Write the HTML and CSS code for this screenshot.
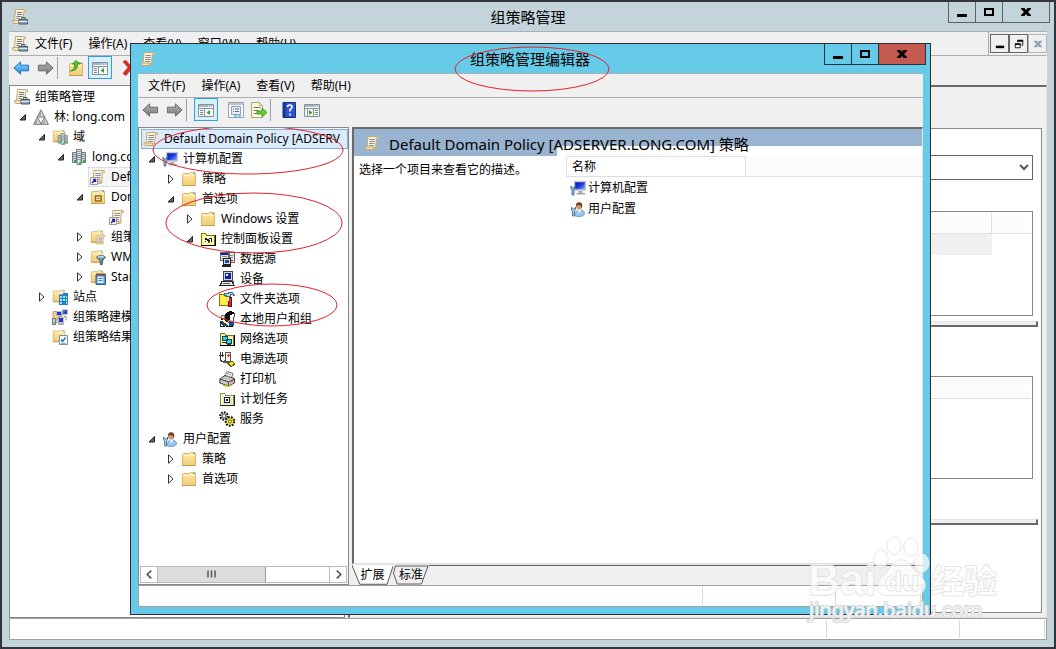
FILE: index.html
```html
<!DOCTYPE html>
<html lang="zh-CN">
<head>
<meta charset="utf-8">
<title>组策略管理</title>
<link rel="stylesheet" href="styles.css">
</head>
<body>
<svg class="sprite" aria-hidden="true">
  <defs>
    <linearGradient id="g-folder" x1="0" y1="0" x2="0" y2="1"><stop offset="0" stop-color="#ffe9a8"/><stop offset="1" stop-color="#f0cc78"/></linearGradient>
    <linearGradient id="g-blue" x1="0" y1="0" x2="0" y2="1"><stop offset="0" stop-color="#8fd8ff"/><stop offset="1" stop-color="#1d86dc"/></linearGradient>
    <linearGradient id="g-gray" x1="0" y1="0" x2="0" y2="1"><stop offset="0" stop-color="#b5b5b5"/><stop offset="1" stop-color="#767676"/></linearGradient>
    <linearGradient id="g-screen" x1="0" y1="0" x2="1" y2="1"><stop offset="0" stop-color="#0010a0"/><stop offset=".5" stop-color="#1a3be0"/><stop offset="1" stop-color="#9cc4ff"/></linearGradient>
  </defs>
  <symbol id="open" viewBox="0 0 10 10"><path d="M7.500 2.500v5.500H2z" fill="#666" stroke="#222"/></symbol>
  <symbol id="closed" viewBox="0 0 10 10"><path d="M2.500 .8v8.400l4.500-4.200z" fill="#fff" stroke="#333"/></symbol>
  <symbol id="scroll" viewBox="0 0 16 16"><path d="M4 1.500h9.500q1.500 0 1 2h-2l-1 9H3z" fill="#faf1d6" stroke="#c0a877"/><path d="M12.500 1.500q-1.200 1-.8 2.500h3q.5-2.500-2.200-2.500z" fill="#d9c290"/><path d="M1 12h8.500q-.5 2.500 1.500 2.500H2.500Q.8 14.500 1 12zM11 14.500q1.600-.3 1-2.500" fill="#f4e3b5" stroke="#c0a877"/><path d="M5.500 4.500H11M5.300 6.500h5.500M5 8.500h5.500M4.800 10.500H10" stroke="#8b8fa6"/></symbol>
  <symbol id="scroll-pc" viewBox="0 0 16 16"><path d="M3.500 .5h9q1.500 0 1 2h-1.700l-1 9H2.500z" fill="#faf1d6" stroke="#c0a877"/><path d="M.5 11.500h7v3H2q-1.500 0-1.500-3z" fill="#f4e3b5" stroke="#c0a877"/><path d="M5 3.500h5M5 5.500h5M4.500 7.500h5M4.500 9.500h3" stroke="#777b8c"/><path d="M7 10.500h8.500v4.500H7z" fill="#8fa5b5" stroke="#48596a"/><path d="M9.500 10V8.500h3.500V10" fill="none" stroke="#48596a"/><path d="M7 12.500h8.500" stroke="#dce7ee"/></symbol>
  <symbol id="scroll-link" viewBox="0 0 16 16"><use href="#scroll"/><path d="M.5 8.500h7v7h-7z" fill="#fff" stroke="#999"/><path d="M2 14l3-3M2.800 10.500h2.700v2.700" fill="none" stroke="#25259a" stroke-width="1.500"/></symbol>
  <symbol id="forest" viewBox="0 0 16 16"><path d="M8 .8L15.400 15.300H.6z" fill="#d8d8d8" stroke="#777"/><path d="M4.400 8h7.200L8 15z" fill="#fafafa" stroke="#777"/><path d="M8 2v5.500H5.200zM4.300 9.500V14.800H1.500zM11.700 9.500v5.300H9.200z" fill="#a5a5a5"/></symbol>
  <symbol id="folder" viewBox="0 0 16 16"><path d="M1.500 3.500q0-1 1-1h6l1-1h4q1 0 1 1v12h-13z" fill="url(#g-folder)" stroke="#d9b566"/><path d="M10 2.500h4" stroke="#fff"/><path d="M12 2.500h2" stroke="#4aa3e8"/><path d="M2 4.500h12" stroke="#fff3c8"/><path d="M1 14.500h14" stroke="#c59d50"/></symbol>
  <symbol id="servers" viewBox="0 0 16 16"><g stroke="#6d7b82"><path d="M5.500.5h5v9h-5z" fill="#dbe3e6"/><path d="M1.500 3.500h4v10h-4zM10.500 3.500h4v10h-4z" fill="#c3ced2"/><path d="M6 6.500h4v9H6z" fill="#dfe7ea"/></g><path d="M6 2.500h4M6 4.500h4M2 5.500h3M2 7.500h3M2 9.500h3M11 5.500h3M11 7.500h3M11 9.500h3M6.500 8.500h3M6.500 10.500h3" stroke="#8d9ba1"/><path d="M3 12h2M12 12h2M8 14h2" stroke="#21bf31" stroke-width="2"/></symbol>
  <symbol id="folder-servers" viewBox="0 0 16 16"><use href="#folder" width="14" height="14"/><use href="#servers" x="5" y="4" width="12" height="12"/></symbol>
  <symbol id="folder-ou" viewBox="0 0 16 16"><use href="#folder"/><path d="M5.500 7h5.500v5H5.500z" fill="#fff2bd" stroke="#8f6914" stroke-width="1.500"/><path d="M7 9.500h2.500" stroke="#8f6914"/></symbol>
  <symbol id="folder-scroll" viewBox="0 0 16 16"><use href="#folder" width="14" height="15"/><use href="#scroll" x="5" y="5" width="11" height="11"/></symbol>
  <symbol id="folder-filter" viewBox="0 0 16 16"><use href="#folder" width="14" height="15"/><path d="M6.500 8h9l-3.200 4v3.500h-2V12z" fill="#6f8fae" stroke="#3f5c7b"/><ellipse cx="11" cy="8" rx="4.200" ry="1.400" fill="#d6e4ef" stroke="#5c7a98"/></symbol>
  <symbol id="folder-book" viewBox="0 0 16 16"><use href="#folder" width="14" height="15"/><path d="M6 5.500h9.500v10H6z" fill="#5a98cd" stroke="#2f5d8a"/><path d="M6 5.500h9.500" stroke="#7a4b3a" stroke-width="2"/><path d="M7.500 7.500h6v6.500h-6z" fill="#dceaf6"/><path d="M8.500 9.500h4M8.500 11.500h4" stroke="#58799a"/></symbol>
  <symbol id="folder-site" viewBox="0 0 16 16"><use href="#folder" width="14" height="14"/><path d="M7 5.500h4V4h5v12H7z" fill="#1b7fd0"/><path d="M8 7h2v2H8zM11 7h2v2h-2zM14 7h1v2h-1zM8 10h2v2H8zM11 10h2v2h-2zM14 10h1v2h-1zM8 13h2v2H8zM14 13h1v2h-1z" fill="#b8e3ff"/></symbol>
  <symbol id="modeling" viewBox="0 0 16 16"><path d="M1 2.500h9v11H1z" fill="#eed08a" stroke="#c79f52"/><path d="M4.500 2.500h5v4h-5zM10.500.8h5v4.500h-5zM6.500 8.500h5v5h-5z" fill="#2837c4" stroke="#b6bed0"/><path d="M.5 9.500h3v6h-3z" fill="#d0d6dc" stroke="#69747e"/><path d="M3.500 12l9-10M12 7.500h2v4" stroke="#7c8ea5" fill="none"/><path d="M1 14h2" stroke="#2bc33a"/><path d="M6 15h6" stroke="#566"/></symbol>
  <symbol id="folder-results" viewBox="0 0 16 16"><use href="#folder" width="14" height="14"/><path d="M7.500 6.500h8v9h-8z" fill="#f5fafc" stroke="#7e93a2"/><path d="M9 10.500l1.500 2 3-4" fill="none" stroke="#2670b8" stroke-width="1.400"/><path d="M9 14.500h5" stroke="#9ab"/></symbol>
  <symbol id="pc-config" viewBox="0 0 16 16"><path d="M4.500 1.500h11v8.500h-11z" fill="url(#g-screen)" stroke="#c3c8cc" stroke-width="1.400"/><path d="M8.500 11h4v2h2.500v1.500H6.500V13h2z" fill="#a4abb0"/><path d="M1 6v2.500q0 1 1 1.500v5h2v-5q1-.5 1-1.500V6L3.800 8H2.200z" fill="#8ab2d8" stroke="#39658e" stroke-width=".8"/></symbol>
  <symbol id="user-config" viewBox="0 0 16 16"><path d="M5 14.500q0-5 4.500-5.500 5 0 5 4-1 2.500-5 2.500-4 0-4.500-1z" fill="#9cc6ec" stroke="#6f9fd0"/><path d="M8 9l1.500 3L11 9z" fill="#fff"/><circle cx="9" cy="5.500" r="3" fill="#d79a6d"/><path d="M6 5.500Q5.500 1.500 9 1.300q3.700-.1 3.200 4.700l-.8 1.500Q11.500 4.500 9 4 7 3.800 6 5.500z" fill="#6d4024"/><path d="M1.500 6v2.500q0 1 1 1.500v5h2v-5q1-.5 1-1.500V6L4.300 8H2.700z" fill="#b7cfe4" stroke="#39658e" stroke-width=".8"/></symbol>
  <symbol id="cp-folder" viewBox="0 0 16 16" shape-rendering="crispEdges"><path d="M1.500 2.500h4l1 1.500h8v10h-13z" fill="#ffff8c" stroke="#77770a"/><path d="M1 14.500h14.500V4" fill="none" stroke="#000"/><path d="M4 6h9v6H4z" fill="#fff"/><path d="M5 7h2v2H5zM7 8h2v2H7zM9 7h3v1H9zM11 8h1v3h-1zM5 10h1v1H5zM9 9h1v1H9z" fill="#111"/><path d="M8 10h2v2H8z" fill="#a22"/></symbol>
  <symbol id="data-source" viewBox="0 0 16 16" shape-rendering="crispEdges"><path d="M1 1.500h9v8H1zM9.500 1.500h6v10h-6z" fill="#e5e5e5" stroke="#666"/><path d="M2 2.500h7" stroke="#111ea8" stroke-width="2"/><path d="M3 5h5M3 7h5M11 4h3M11 6h3" stroke="#888"/><path d="M4.500 7.500h7v6h-7z" fill="#ddd" stroke="#222"/><path d="M6 9h4v3H6z" fill="#164bb5"/><path d="M3 15h9" stroke="#222" stroke-width="2"/><path d="M12 9h2v1h-2z" fill="red"/></symbol>
  <symbol id="device" viewBox="0 0 16 16" shape-rendering="crispEdges"><path d="M4.500.5h9v9h-9z" fill="#d5d5d5" stroke="#444"/><path d="M6 2h6v6H6z" fill="#1020b5"/><path d="M7 3h2v2H7z" fill="#fff"/><path d="M3 10.500h10l2 4H1z" fill="#e9e9e9" stroke="#222"/><path d="M4 12.500h7M13.500 10q2 1 1 4" stroke="#555" fill="none"/></symbol>
  <symbol id="folder-options" viewBox="0 0 16 16" shape-rendering="crispEdges"><path d="M.5 3.500h5l1 1.500h5v9H.5z" fill="#ffef48" stroke="#7d7408"/><path d="M5.500 2.500h3l2-1h3l2 3-2-1h-2v2H9l-2-1H5.500z" fill="#a5e5f8" stroke="#467"/><path d="M9.500 6h3v9h-3z" fill="#f12318" stroke="#611"/><path d="M9 6v4" stroke="#fff"/></symbol>
  <symbol id="local-users" viewBox="0 0 16 16" shape-rendering="crispEdges"><path d="M1 10h5l2 2 4-3 3 3v3H1z" fill="#164a8a"/><path d="M6 3l2-2 3-1 4 1v2h-2l-2 2v4l-3 2-3-2-4 0 3-2z" fill="#080808"/><path d="M11 4h3l1 3-2 3h-2z" fill="#fff"/><path d="M15 2v4l-1 4" fill="none" stroke="#444"/><path d="M2 4h3l1 3-2 1-2-1z" fill="#efe79c" stroke="#777"/><path d="M4 9l6 5" stroke="#fff799" stroke-width="2"/><path d="M1 11l4 4H1z" fill="#fff" stroke="#222"/><path d="M7 15h7" stroke="#000"/></symbol>
  <symbol id="network" viewBox="0 0 16 16" shape-rendering="crispEdges"><path d="M1.500 2.500h4l1 1.500h8v10h-13z" fill="#f5f6a6" stroke="#777620"/><path d="M1 14.500h14.500V4" fill="none" stroke="#000"/><path d="M3.500 5.500h5v4h-5zM7.500 8.500h5v4h-5z" fill="#27dfde" stroke="#173c62"/><path d="M3 11h4M8 13.500h4" stroke="#333"/></symbol>
  <symbol id="power" viewBox="0 0 16 16" shape-rendering="crispEdges"><path d="M6.500 1.500h5v9h-5z" fill="#f8f6e7" stroke="#555"/><path d="M8 4h3M9.500 2.500v3" stroke="#e22"/><path d="M1.500 1v7q0 3 4 3M3.500 1v5M0 4h5" fill="none" stroke="#333"/><path d="M4 11q4-2 7 3" fill="none" stroke="#555" stroke-width="2"/><path d="M9 12l4-2 3 3-4 2.500z" fill="#f2e12c" stroke="#605609"/></symbol>
  <symbol id="printer" viewBox="0 0 16 16"><path d="M5 6l3-5.500 6 2L12 8z" fill="#fff" stroke="#666"/><path d="M.8 8L6 4.500l9.500 3V12l-6 3L.8 12z" fill="#c6c6c6" stroke="#444"/><path d="M1 8l8.500 3 6-3M9.500 11v4" fill="none" stroke="#444"/><path d="M8 2.500l4 1.500M7 4.500l4 1.500" stroke="#999"/><path d="M12 10.500l2-1" stroke="#e44" stroke-width="1.500"/><path d="M4 14.500l5 1 4-1.500" fill="none" stroke="#cfd011" stroke-width="1.300"/></symbol>
  <symbol id="schedule" viewBox="0 0 16 16" shape-rendering="crispEdges"><path d="M1.500 2.500h4l1 1.500h8v10h-13z" fill="#f8f8c4" stroke="#88885a"/><path d="M1 14.500h14.500V4" fill="none" stroke="#222"/><path d="M4 6h9v7H4z" fill="#e4e4a8"/><path d="M5.500 6.500h5v5h-5z" fill="#fff" stroke="#151a75"/><path d="M7 8h2v2H7z" fill="#111"/></symbol>
  <symbol id="services" viewBox="0 0 16 16"><circle cx="5" cy="5" r="3.800" fill="#ddd" stroke="#111" stroke-width="2" stroke-dasharray="1.700 1.200"/><circle cx="5" cy="5" r="2" fill="#fff" stroke="#444"/><circle cx="11" cy="10.500" r="4.200" fill="#f8ed26" stroke="#111" stroke-width="2.200" stroke-dasharray="1.700 1.200"/><circle cx="11" cy="10.500" r="3" fill="#f8ed26"/><circle cx="11" cy="10.500" r="1.500" fill="#fff" stroke="#554"/></symbol>
  <symbol id="arrow-blue" viewBox="0 0 18 16"><path d="M1 8l7-6.500V5h8.500v6H8v3.500z" fill="url(#g-blue)" stroke="#1c6fb8"/></symbol>
  <symbol id="arrow-left" viewBox="0 0 18 16"><path d="M1 8l7-6.500V5h8.500v6H8v3.500z" fill="url(#g-gray)" stroke="#666"/></symbol>
  <symbol id="arrow-right" viewBox="0 0 18 16"><path d="M17 8l-7-6.500V5H1.500v6H10v3.500z" fill="url(#g-gray)" stroke="#666"/></symbol>
  <symbol id="folder-up" viewBox="0 0 16 16"><use href="#folder" y="1"/><path d="M2.500 11Q7 9.500 6.500 4H4.300L8 .5 12 4H9.500q.5 7-7 7z" fill="#4cc62c" stroke="#278113" stroke-width=".7"/></symbol>
  <symbol id="console-tree" viewBox="0 0 16 16"><path d="M.5 2.500h15v12H.5z" fill="#fff" stroke="#84909c"/><path d="M1 4h14" stroke="#a7b4c1" stroke-width="2"/><path d="M10 4h1M12 4h1M14 4h1" stroke="#fff"/><path d="M1 6.500h14M6.500 7v7.500" stroke="#84909c"/><path d="M2 8.500h3M2 10.500h3M2 12.500h3" stroke="#5c86ad"/><path d="M12 8v5l-3.500-2.500z" fill="#2aa51e"/></symbol>
  <symbol id="action-pane" viewBox="0 0 16 16"><path d="M.5 2.500h15v12H.5z" fill="#fff" stroke="#84909c"/><path d="M1 4h14" stroke="#a7b4c1" stroke-width="2"/><path d="M10 4h1M12 4h1M14 4h1" stroke="#fff"/><path d="M1 6.500h14M9.500 7v7.500M3.500 7v7.500" stroke="#84909c"/><path d="M11 8.500h3M11 10.500h3M11 12.500h3" stroke="#5c86ad"/><path d="M5 8v5l3.500-2.500z" fill="#2aa51e"/></symbol>
  <symbol id="properties" viewBox="0 0 16 16"><path d="M.5.500h15v15H.5z" fill="#f9fbfc" stroke="#9aa3ab"/><path d="M1 2h14" stroke="#b9c3cc" stroke-width="2"/><path d="M3.500 4.500h9v8h-9z" fill="#e7edf2" stroke="#8da0b2"/><path d="M5 7h1M7 7h4M5 9.500h1M7 9.500h4" stroke="#56728e"/><path d="M6 14h3M10 14h3" stroke="#4bb9ee" stroke-width="1.500"/></symbol>
  <symbol id="export" viewBox="0 0 16 16"><path d="M.5.500h8l3 3v12H.5z" fill="#fff9df" stroke="#b3a66d"/><path d="M8.500.500v3h3" fill="#eee" stroke="#b3a66d"/><path d="M2.500 5.500h7M2.500 8.500h5M2.500 11.500h5" stroke="#777"/><path d="M6 9h5V6l5 4.500-5 4.500v-3H6z" fill="#67cf31" stroke="#378d19" stroke-width=".8"/></symbol>
  <symbol id="help" viewBox="0 0 16 16"><path d="M2 .5h12.500v15H2z" fill="#2d56cc" stroke="#15307d"/><path d="M3.500 1v14" stroke="#142f88" stroke-width="2"/><path d="M6.500 5q0-2 2.300-2 2.200 0 2.200 2 0 1.500-2 2.500v2M9 11.500v2" fill="none" stroke="#fff" stroke-width="1.600"/></symbol>
  <symbol id="delete" viewBox="0 0 16 16"><path d="M1 1.500l3-1L8 5l4-4 2 1-4 6 5 6-3 1.500-4-5-4 5-3-2L6 7.500z" fill="#e02c26" stroke="#b31212" stroke-width=".6"/></symbol>
  <symbol id="minimize" viewBox="0 0 12 12"><path d="M1 8h10v3H1z"/></symbol>
  <symbol id="maximize" viewBox="0 0 12 12"><path d="M2 3h8v6H2z" fill="none" stroke="#000" stroke-width="2"/></symbol>
  <symbol id="close" viewBox="0 0 12 12"><path d="M1 2h3.500L6 4l1.500-2H11v1L8 6l3 3v1H7.500L6 8l-1.500 2H1V9l3-3-3-3z"/></symbol>
  <symbol id="restore" viewBox="0 0 12 12"><path d="M4.500 4V2.500h6v5H9M1.500 6.500h6v4h-6z" fill="none" stroke="#000"/><path d="M4 2h7M1 6h7" stroke="#000" stroke-width="2"/></symbol>
</svg>

<main class="window manager">
  <header class="titlebar">
    <svg class="icon"><use href="#scroll-pc"/></svg>
    <h1>组策略管理</h1>
    <div class="caption">
      <button aria-label="最小化"><svg><use href="#minimize"/></svg></button>
      <button aria-label="最大化"><svg><use href="#maximize"/></svg></button>
      <button class="wide" aria-label="关闭"><svg><use href="#close"/></svg></button>
    </div>
  </header>
  <nav class="menubar">
    <svg class="icon"><use href="#scroll-pc"/></svg>
    <button>文件(F)</button><button>操作(A)</button><button>查看(V)</button><button>窗口(W)</button><button>帮助(H)</button>
    <div class="mdi">
      <button aria-label="最小化子窗口"><svg><use href="#minimize"/></svg></button>
      <button aria-label="还原子窗口"><svg><use href="#restore"/></svg></button>
      <button aria-label="关闭子窗口" disabled><svg><use href="#close"/></svg></button>
    </div>
  </nav>
  <div class="toolbar">
    <button aria-label="后退"><svg class="arrow"><use href="#arrow-blue"/></svg></button>
    <button aria-label="前进"><svg class="arrow"><use href="#arrow-right"/></svg></button>
    <span class="divider"></span>
    <button class="spaced" aria-label="向上"><svg class="icon"><use href="#folder-up"/></svg></button>
    <button class="pressed" aria-label="显示控制台树"><svg class="icon"><use href="#console-tree"/></svg></button>
    <button class="spaced" aria-label="删除"><svg class="icon"><use href="#delete"/></svg></button>
  </div>
  <div class="manager-body">
    <section class="tree manager-tree">
      <div class="node root"><svg class="icon"><use href="#scroll-pc"/></svg><span>组策略管理</span></div>
      <ul>
        <li><div class="node"><svg class="twist"><use href="#open"/></svg><svg class="icon"><use href="#forest"/></svg><span>林: long.com</span></div>
          <ul>
            <li><div class="node"><svg class="twist"><use href="#open"/></svg><svg class="icon"><use href="#folder-servers"/></svg><span>域</span></div>
              <ul>
                <li><div class="node"><svg class="twist"><use href="#open"/></svg><svg class="icon"><use href="#servers"/></svg><span>long.com</span></div>
                  <ul>
                    <li><div class="node leaf inactive"><svg class="icon"><use href="#scroll-link"/></svg><span>Default Domain Policy</span></div></li>
                    <li><div class="node"><svg class="twist"><use href="#open"/></svg><svg class="icon"><use href="#folder-ou"/></svg><span>Domain Controllers</span></div>
                      <ul><li><div class="node leaf"><svg class="icon"><use href="#scroll-link"/></svg></div></li></ul>
                    </li>
                    <li><div class="node"><svg class="twist"><use href="#closed"/></svg><svg class="icon"><use href="#folder-scroll"/></svg><span>组策略对象</span></div></li>
                    <li><div class="node"><svg class="twist"><use href="#closed"/></svg><svg class="icon"><use href="#folder-filter"/></svg><span>WMI 筛选器</span></div></li>
                    <li><div class="node"><svg class="twist"><use href="#closed"/></svg><svg class="icon"><use href="#folder-book"/></svg><span>Starter GPO</span></div></li>
                  </ul>
                </li>
              </ul>
            </li>
            <li><div class="node"><svg class="twist"><use href="#closed"/></svg><svg class="icon"><use href="#folder-site"/></svg><span>站点</span></div></li>
            <li><div class="node leaf"><svg class="icon"><use href="#modeling"/></svg><span>组策略建模</span></div></li>
            <li><div class="node leaf"><svg class="icon"><use href="#folder-results"/></svg><span>组策略结果</span></div></li>
          </ul>
        </li>
      </ul>
    </section>
    <section class="details">
      <div class="sheet">
        <select class="location" aria-label="位置"><option></option></select>
        <div class="listbox links"><div class="head"><span></span></div><div class="line"></div></div>
        <div class="splitter"></div>
        <div class="listbox filters"><div class="head"></div></div>
        <div class="splitter"></div>
      </div>
    </section>
  </div>
  <footer class="statusbar"><span class="grow"></span><span class="wide-cell"></span><span class="narrow-cell"></span></footer>
</main>

<section class="window editor">
  <header class="titlebar">
    <svg class="icon"><use href="#scroll"/></svg>
    <h2>组策略管理编辑器</h2>
    <div class="caption">
      <button aria-label="最小化"><svg><use href="#minimize"/></svg></button>
      <button aria-label="最大化"><svg><use href="#maximize"/></svg></button>
      <button class="wide danger" aria-label="关闭"><svg><use href="#close"/></svg></button>
    </div>
    <svg class="mark mark-title" viewBox="0 0 156 46"><ellipse cx="78" cy="23" rx="77" ry="22"/></svg>
  </header>
  <nav class="menubar"><button>文件(F)</button><button>操作(A)</button><button>查看(V)</button><button>帮助(H)</button></nav>
  <div class="toolbar">
    <button aria-label="后退"><svg class="arrow"><use href="#arrow-left"/></svg></button>
    <button aria-label="前进"><svg class="arrow"><use href="#arrow-right"/></svg></button>
    <span class="divider"></span>
    <button class="pressed" aria-label="显示控制台树"><svg class="icon"><use href="#console-tree"/></svg></button>
    <button class="spaced" aria-label="属性"><svg class="icon"><use href="#properties"/></svg></button>
    <button aria-label="导出列表"><svg class="icon"><use href="#export"/></svg></button>
    <span class="divider"></span>
    <button class="spaced" aria-label="帮助"><svg class="icon"><use href="#help"/></svg></button>
    <button aria-label="显示操作窗格"><svg class="icon"><use href="#action-pane"/></svg></button>
  </div>
  <div class="editor-body">
    <section class="tree editor-tree">
      <div class="node root selected"><svg class="icon"><use href="#scroll"/></svg><span>Default Domain Policy [ADSERV</span></div>
      <ul>
        <li><div class="node"><svg class="twist"><use href="#open"/></svg><svg class="icon"><use href="#pc-config"/></svg><span>计算机配置</span></div>
          <ul>
            <li><div class="node"><svg class="twist"><use href="#closed"/></svg><svg class="icon"><use href="#folder"/></svg><span>策略</span></div></li>
            <li><div class="node"><svg class="twist"><use href="#open"/></svg><svg class="icon"><use href="#folder"/></svg><span>首选项</span></div>
              <ul>
                <li><div class="node"><svg class="twist"><use href="#closed"/></svg><svg class="icon"><use href="#folder"/></svg><span>Windows 设置</span></div></li>
                <li><div class="node"><svg class="twist"><use href="#open"/></svg><svg class="icon"><use href="#cp-folder"/></svg><span>控制面板设置</span></div>
                  <ul>
                    <li><div class="node leaf"><svg class="icon"><use href="#data-source"/></svg><span>数据源</span></div></li>
                    <li><div class="node leaf"><svg class="icon"><use href="#device"/></svg><span>设备</span></div></li>
                    <li><div class="node leaf"><svg class="icon"><use href="#folder-options"/></svg><span>文件夹选项</span></div></li>
                    <li><div class="node leaf"><svg class="icon"><use href="#local-users"/></svg><span>本地用户和组</span></div></li>
                    <li><div class="node leaf"><svg class="icon"><use href="#network"/></svg><span>网络选项</span></div></li>
                    <li><div class="node leaf"><svg class="icon"><use href="#power"/></svg><span>电源选项</span></div></li>
                    <li><div class="node leaf"><svg class="icon"><use href="#printer"/></svg><span>打印机</span></div></li>
                    <li><div class="node leaf"><svg class="icon"><use href="#schedule"/></svg><span>计划任务</span></div></li>
                    <li><div class="node leaf"><svg class="icon"><use href="#services"/></svg><span>服务</span></div></li>
                  </ul>
                </li>
              </ul>
            </li>
          </ul>
        </li>
        <li><div class="node"><svg class="twist"><use href="#open"/></svg><svg class="icon"><use href="#user-config"/></svg><span>用户配置</span></div>
          <ul>
            <li><div class="node"><svg class="twist"><use href="#closed"/></svg><svg class="icon"><use href="#folder"/></svg><span>策略</span></div></li>
            <li><div class="node"><svg class="twist"><use href="#closed"/></svg><svg class="icon"><use href="#folder"/></svg><span>首选项</span></div></li>
          </ul>
        </li>
      </ul>
      <div class="scrollbar">
        <button aria-label="向左滚动"><svg viewBox="0 0 8 8"><path d="M5.500 .5L2 4l3.500 3.500"/></svg></button>
        <div class="track"><div class="thumb"><svg viewBox="0 0 9 8"><path d="M1 0v7M4.500 0v7M8 0v7"/></svg></div></div>
        <button aria-label="向右滚动"><svg viewBox="0 0 8 8"><path d="M2.500 .5L6 4 2.500 7.500"/></svg></button>
      </div>
      <svg class="mark mark-root" viewBox="0 0 194 52"><ellipse cx="97" cy="26" rx="95" ry="24"/></svg>
      <svg class="mark mark-prefs" viewBox="0 0 180 64"><ellipse cx="90" cy="32" rx="88" ry="30"/></svg>
      <svg class="mark mark-users" viewBox="0 0 132 46"><ellipse cx="66" cy="23" rx="65" ry="21"/></svg>
    </section>
    <section class="result">
      <div class="result-view">
        <header class="banner"><svg class="icon"><use href="#scroll"/></svg><span>Default Domain Policy [ADSERVER.LONG.COM] 策略</span></header>
        <div class="columns">
          <p>选择一个项目来查看它的描述。</p>
          <div class="items">
            <div class="items-head"><span>名称</span></div>
            <ul>
              <li><svg class="icon"><use href="#pc-config"/></svg><span>计算机配置</span></li>
              <li><svg class="icon"><use href="#user-config"/></svg><span>用户配置</span></li>
            </ul>
          </div>
        </div>
      </div>
      <div class="tabs">
        <button class="tab"><svg viewBox="0 0 42 20"><path d="M0 0l8 19.500h28L42 0z" fill="#fff"/><path d="M0 0l8 19.500h28L42 1" fill="none" stroke="#555"/></svg><span>扩展</span></button>
        <button class="tab second"><svg viewBox="0 0 38 20"><path d="M2.500 .5h35l-7 19H4L.5 10z" fill="#efefef"/><path d="M37.500 .5h-35L.5 8 4.500 19.500H30L37 .5" fill="none" stroke="#555"/></svg><span>标准</span></button>
        <span class="tab-fill"></span>
      </div>
    </section>
  </div>
  <footer class="statusbar"><span class="grow"></span><span class="wide-cell"></span><span class="narrow-cell"></span></footer>
</section>

<svg class="watermark" viewBox="0 0 200 96" role="img" aria-label="Baidu 经验">
  <g class="outline">
    <text x="3" y="61" class="brand">Bai</text>
    <ellipse cx="76" cy="25" rx="7" ry="9"/><ellipse cx="89" cy="12" rx="7" ry="9"/><ellipse cx="106" cy="13" rx="7" ry="9"/><ellipse cx="117" cy="29" rx="7" ry="9"/>
    <path d="M96 26c9 0 11 9 17 14 7 6 9 10 6 16-4 8-12 5-23 5s-19 3-23-5c-2-6 1-11 7-16 6-6 8-14 16-14z"/>
    <text x="126" y="59" class="cn">经验</text>
    <text x="80" y="57" class="du">du</text>
    <text x="4" y="83" class="url">jingyan.baidu.com</text>
  </g>
</svg>
</body>
</html>
```

FILE: styles.css
```css
* { box-sizing: border-box; }
body {
  position: relative;
  display: flex;
  flex-direction: column;
  min-height: 100vh;
  margin: 0;
  font: 12px/20px "Noto Sans", "Noto Sans CJK SC", sans-serif;
  color: #000;
}
ul { list-style: none; margin: 0; padding: 0; }
h1, h2, p { margin: 0; font-weight: 400; }
button { margin: 0; padding: 0; border: 0; background: none; font: inherit; color: inherit; }
.sprite { position: absolute; width: 0; height: 0; }
.icon { flex: none; display: block; width: 16px; height: 16px; }

/* Window frames */
.window { display: flex; flex-direction: column; }
.manager { flex: 1; padding: 0 7px 7px; border: 2px solid #35353d; background: #c3d5db; }
.editor {
  position: absolute;
  top: 43px;
  right: 125px;
  bottom: 34px;
  left: 130px;
  padding: 0 7px 7px;
  border: 1px solid #2b2b33;
  background: #66cae9;
}
.titlebar { position: relative; display: flex; align-items: center; height: 29px; padding-left: 3px; }
.titlebar h1, .titlebar h2 { flex: 1; padding-left: 80px; text-align: center; font-size: 15px; }
.caption { display: flex; align-self: flex-start; margin-right: -3px; border: 1px solid #5b606b; border-top: 0; }
.caption button { display: grid; place-items: center; width: 27px; height: 20px; border-right: 1px solid #5b606b; }
.caption button.wide { width: 46px; border-right: 0; }
.caption svg { width: 12px; height: 12px; }
.caption .danger { background: #c4594f; }
.editor .caption, .editor .caption button { border-color: #26323c; }

.menubar { display: flex; align-items: center; height: 25px; padding-left: 2px; border-top: 1px solid #a9b0b8; border-bottom: 1px solid #adadad; background: #f0f0f0; }
.menubar > button { padding: 0 8px; }
.menubar > .icon { margin-left: 1px; }
.manager .menubar > .icon + button { padding-left: 7px; }
.mdi { display: flex; align-self: stretch; align-items: center; margin-left: auto; padding-left: 1px; border-left: 1px solid #adadad; }
.mdi button { display: grid; place-items: center; width: 19px; height: 19px; border: 1px solid #666; }
.mdi button:disabled { border-color: #b5b5b5; fill: #94a3b3; }
.mdi svg { width: 10px; height: 10px; }

.toolbar { display: flex; align-items: center; gap: 7px; height: 29px; padding: 0 0 6px 4px; background: #f0f0f0; }
.toolbar button { display: grid; place-items: center; height: 23px; }
.toolbar .arrow { width: 17px; height: 16px; }
.toolbar .divider { width: 1px; height: 22px; margin-left: -4px; background: #a0a0a0; }
.toolbar .pressed { width: 24px; border: 1px solid #2f9fe0; background: #d9effb; }
.toolbar .spaced { margin-left: 3px; }
.manager .toolbar .pressed { margin-left: -3px; }

.statusbar { display: flex; height: 22px; padding: 1px; border: 1px solid #a0a0a0; background: #fff; }
.statusbar span { border-right: 1px solid #d8d8d8; }
.statusbar .grow { flex: 1; }
.statusbar .wide-cell { width: 133px; }
.statusbar .narrow-cell { width: 85px; }

/* Trees */
.tree { padding: 1px 0 0 2px; border: 1px solid #828790; background: #fff; overflow: hidden; }
.tree > ul { padding-left: 2px; }
.tree ul ul { padding-left: 19px; }
.node { display: flex; align-items: center; height: 20px; white-space: nowrap; }
.node span { padding-left: 5px; }
.node .twist { flex: none; width: 10px; height: 10px; margin: 0 5px 0 4px; }
.node.leaf { padding-left: 19px; }
.node.root { padding-left: 2px; }

/* Management console */
.manager-body { flex: 1; display: flex; gap: 3px; background: #f0f0f0; }
.manager-tree { width: 336px; }
.manager-tree .inactive { margin-left: 17px; padding-left: 1px; border: 1px solid #ddd; background: #f5f5f5; }
.details { flex: 1; display: flex; padding: 41px 4px 4px; border: 1px solid #e3e3e3; border-top: 2px solid #696969; border-left: 2px solid #696969; }
.sheet { flex: 1; padding: 26px 3px 0 12px; border: 1px solid #8a8a94; background: #fff; }
.location { display: block; width: calc(100% - 5px); height: 25px; border: 1px solid #666; border-radius: 0; background: #fff; color: #555; }
.listbox { margin: 31px 5px 5px 0; height: 105px; padding: 1px; border: 1px solid #828790; }
.listbox .head { display: flex; height: 21px; border-bottom: 1px solid #dfdfdf; background: #fcfcfc; }
.listbox .head span { flex: 1; margin-right: 39px; border-right: 1px solid #dfdfdf; }
.listbox .line { height: 21px; margin-right: 39px; background: #f0f0f0; }
.listbox.filters { height: 103px; margin: 49px 5px 40px 0; }
.splitter { height: 6px; border: 1px solid #e3e3e3; border-right: 2px solid #696969; border-bottom: 2px solid #696969; background: #f0f0f0; }

/* Policy editor */
.editor .titlebar { padding-left: 2px; }
.editor-body { flex: 1; display: grid; grid-template-columns: 211px minmax(0, 1fr); gap: 3px; background: #f0f0f0; }
.editor-tree { position: relative; display: flex; flex-direction: column; }
.editor-tree .selected { padding-left: 1px; border: 1px solid #84acdd; background: #dcebfc; }
.scrollbar { display: flex; height: 17px; margin: auto 1px 1px -1px; border: 1px solid #b9b9b9; }
.scrollbar button { display: grid; place-items: center; width: 16px; }
.scrollbar svg { width: 9px; height: 9px; fill: none; stroke: #555; stroke-width: 1.500; }
.track { flex: 1; border: 1px solid #b9b9b9; border-width: 0 1px; }
.thumb { display: grid; place-items: center; width: 63%; height: 100%; border-right: 1px solid #999; background: #dcdcdc; }

.result { display: flex; flex-direction: column; }
.result-view { flex: 1; border: 1px solid #e3e3e3; border-top: 2px solid #696969; border-left: 2px solid #696969; background: #fff; }
.banner { display: flex; align-items: center; gap: 9px; height: 27px; padding: 0 10px; background: #99b4d1; font-size: 15px; white-space: nowrap; }
.banner span { position: relative; z-index: 1; padding-top: 2px; }
.columns { display: grid; grid-template-columns: 203px minmax(0, 1fr); }
.columns p { padding: 4px 5px; white-space: nowrap; }
.items { margin-top: -10px; padding: 10px 0 0 9px; background: #fff; }
.items-head { height: 21px; border-bottom: 1px solid #dfdfdf; background: #fcfcfc; }
.items-head span { display: block; width: 180px; height: 21px; padding-left: 5px; border: 1px solid #dfdfdf; background: #fff; }
.items li { display: flex; align-items: center; gap: 2px; height: 21px; padding-left: 4px; }
.tabs { display: flex; height: 21px; border-top: 1px solid #e3e3e3; }
.tab { position: relative; width: 41px; }
.tab svg { position: absolute; inset: 0; width: 100%; height: 100%; }
.tab span { position: relative; }
.tab.second { width: 36px; }
.tab-fill { flex: 1; border-top: 1px solid #666; }

/* Hand-drawn highlights */
.mark { position: absolute; fill: none; stroke: #e8202a; pointer-events: none; }
.mark-title { left: calc(50% - 77px); top: 2px; width: 156px; height: 46px; z-index: 2; }
.mark-root { left: 12px; top: -4px; width: 194px; height: 52px; }
.mark-prefs { left: 25px; top: 63px; width: 180px; height: 64px; }
.mark-users { left: 67px; top: 154px; width: 132px; height: 46px; }

.watermark { position: absolute; right: 51px; bottom: 19px; width: 200px; height: 96px; }
.watermark .outline { fill: #fff; fill-opacity: .7; stroke: #d8d8d8; stroke-width: 1; paint-order: stroke; }
.watermark .brand { font: bold 44px "Liberation Sans", sans-serif; }
.watermark .cn { font: bold 33px "Noto Sans CJK SC", sans-serif; }
.watermark .url { font: 20px "Noto Sans", sans-serif; stroke-width: 2; }
.watermark .du { font: bold 28px "Liberation Sans", sans-serif; }
```
